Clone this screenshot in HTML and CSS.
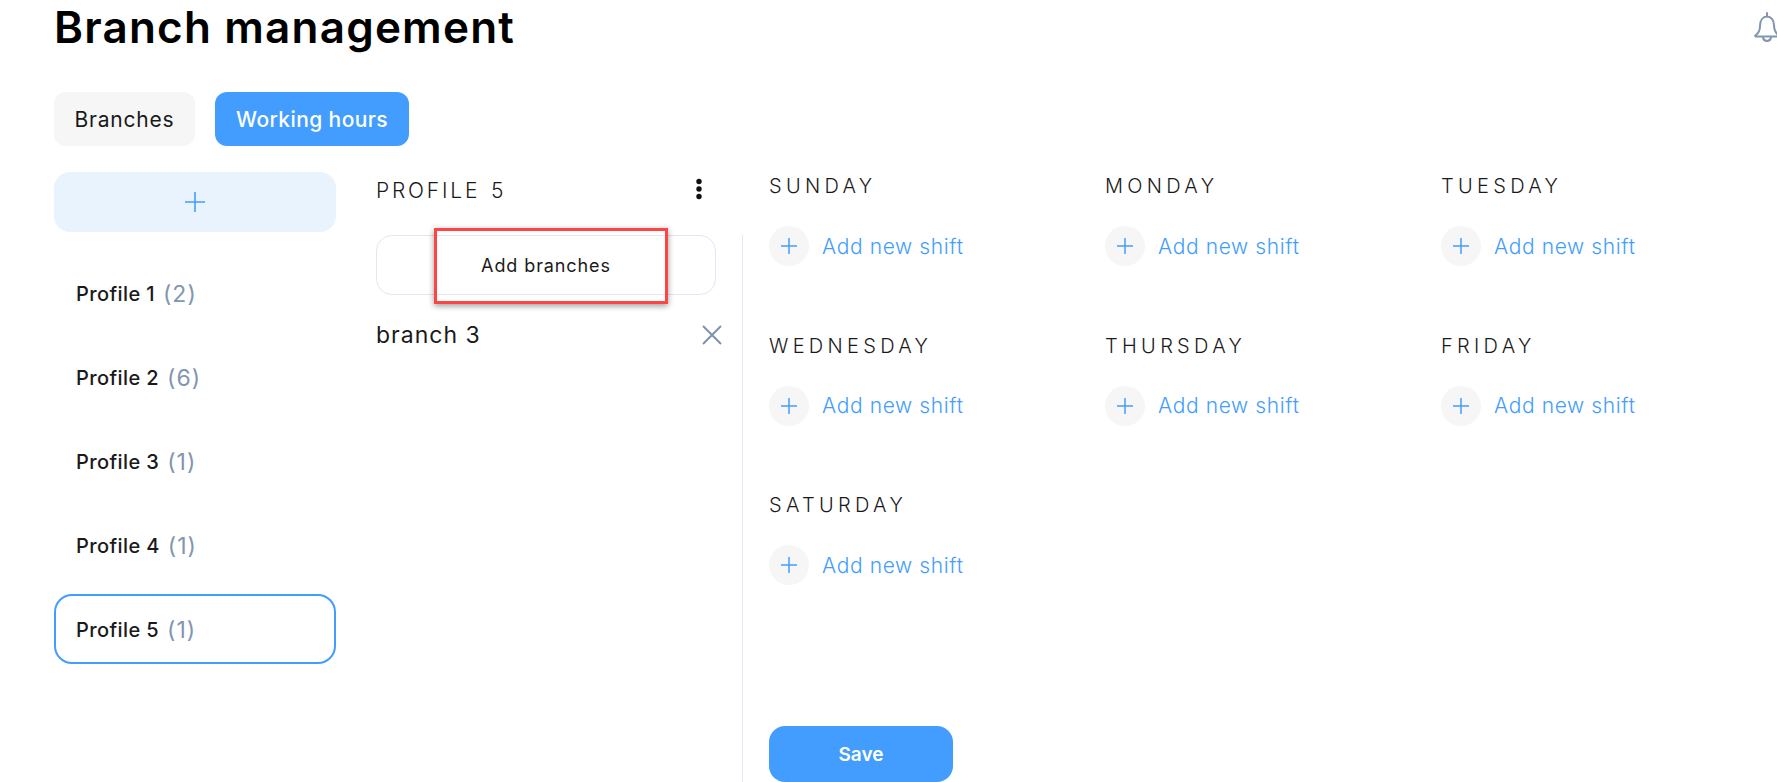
FILE: index.html
```html
<!DOCTYPE html>
<html lang="en">
<head>
  <meta charset="UTF-8" />
  <title>Branch management</title>
  <link rel="stylesheet" href="styles.css">
</head>
<body>

  <div class="page">
    <div class="top-bar">
      <h1>Branch management</h1>
      <svg class="bell" width="34" height="32" viewBox="0 0 34 32" fill="none" stroke="#8296b0" stroke-width="2" stroke-linecap="round" stroke-linejoin="round">
        <path d="M13 1v3.500"/>
        <path d="M2 24.500c-1 0-1-1 0-1.500 2.500-2 4-4 4-9C6 8 9 4.500 13 4.500s7 3.500 7 9c0 5 1.500 7 4 9.500 1 .5 1 1.500 0 1.500z"/>
        <path d="M9 25.500c.5 2.500 2.500 3.500 4 3.500s3.500-1 4-3.500"/>
      </svg>
    </div>

    <div class="tabs">
      <button class="tab">Branches</button>
      <button class="tab tab-active">Working hours</button>
    </div>

    <div class="content">
      <div class="profiles">
        <button class="add-profile">
          <svg width="22" height="22" viewBox="0 0 22 22" stroke="#429dff" stroke-width="1.600"><path d="M11 1v20M1 11h20"/></svg>
        </button>
        <div class="profile-list">
          <div class="profile">Profile 1 <span class="count">(2)</span></div>
          <div class="profile">Profile 2 <span class="count">(6)</span></div>
          <div class="profile">Profile 3 <span class="count">(1)</span></div>
          <div class="profile">Profile 4 <span class="count">(1)</span></div>
          <div class="profile profile-active">Profile 5 <span class="count">(1)</span></div>
        </div>
      </div>

      <div class="details">
        <div class="details-head">
          <h2>PROFILE 5</h2>
          <svg width="8" height="22" viewBox="0 0 8 22" fill="#111"><circle cx="4" cy="3.500" r="2.700"/><circle cx="4" cy="11" r="2.700"/><circle cx="4" cy="18.500" r="2.700"/></svg>
        </div>
        <div class="details-body">
          <div class="branches">
            <div class="add-branches">
              Add branches
              <div class="highlight"></div>
            </div>
            <div class="branch">
              <span>branch 3</span>
              <svg width="20" height="20" viewBox="0 0 20 20" stroke="#7f92ab" stroke-width="2"><path d="M1 1l18 18M19 1L1 19"/></svg>
            </div>
          </div>
        </div>
      </div>

      <div class="hours">
        <div class="days">
          <div class="day">
            <h3>SUNDAY</h3>
            <div class="add-shift"><span class="plus"><svg width="18" height="18" viewBox="0 0 18 18" stroke="#429dff" stroke-width="1.500"><path d="M9 1v16M1 9h16"/></svg></span>Add new shift</div>
          </div>
          <div class="day">
            <h3>MONDAY</h3>
            <div class="add-shift"><span class="plus"><svg width="18" height="18" viewBox="0 0 18 18" stroke="#429dff" stroke-width="1.500"><path d="M9 1v16M1 9h16"/></svg></span>Add new shift</div>
          </div>
          <div class="day">
            <h3>TUESDAY</h3>
            <div class="add-shift"><span class="plus"><svg width="18" height="18" viewBox="0 0 18 18" stroke="#429dff" stroke-width="1.500"><path d="M9 1v16M1 9h16"/></svg></span>Add new shift</div>
          </div>
          <div class="day">
            <h3>WEDNESDAY</h3>
            <div class="add-shift"><span class="plus"><svg width="18" height="18" viewBox="0 0 18 18" stroke="#429dff" stroke-width="1.500"><path d="M9 1v16M1 9h16"/></svg></span>Add new shift</div>
          </div>
          <div class="day">
            <h3>THURSDAY</h3>
            <div class="add-shift"><span class="plus"><svg width="18" height="18" viewBox="0 0 18 18" stroke="#429dff" stroke-width="1.500"><path d="M9 1v16M1 9h16"/></svg></span>Add new shift</div>
          </div>
          <div class="day">
            <h3>FRIDAY</h3>
            <div class="add-shift"><span class="plus"><svg width="18" height="18" viewBox="0 0 18 18" stroke="#429dff" stroke-width="1.500"><path d="M9 1v16M1 9h16"/></svg></span>Add new shift</div>
          </div>
          <div class="day">
            <h3>SATURDAY</h3>
            <div class="add-shift"><span class="plus"><svg width="18" height="18" viewBox="0 0 18 18" stroke="#429dff" stroke-width="1.500"><path d="M9 1v16M1 9h16"/></svg></span>Add new shift</div>
          </div>
        </div>
        <button class="save">Save</button>
      </div>
    </div>
  </div>

</body>
</html>
```

FILE: styles.css
```css
html, body {
  height: 100%;
  margin: 0;
  overflow: hidden;
}
body {
  font-family: Inter, "Noto Sans", sans-serif;
  background: #fff;
  color: #111;
}
button {
  font-family: inherit;
  border: none;
  cursor: pointer;
}
.page {
  height: 782px;
  padding-left: 54px;
  box-sizing: border-box;
  overflow: hidden;
}
.top-bar {
  display: flex;
  justify-content: space-between;
  align-items: flex-start;
  height: 92px;
}
.top-bar h1 {
  margin: 2px 0 0;
  font-size: 44px;
  line-height: 50px;
  font-weight: 600;
  letter-spacing: 1.2px;
  color: #000;
}
.bell {
  margin-top: 12px;
  margin-right: -11px;
}
.tabs {
  display: flex;
  gap: 20px;
  height: 54px;
}
.tab {
  height: 54px;
  width: 141px;
  border-radius: 12px;
  background: #f6f6f6;
  font-size: 21px;
  letter-spacing: 0.8px;
  color: #1a1a1a;
  padding: 0;
}
.tab-active {
  width: 194px;
  background: #429dff;
  color: #fff;
  font-weight: 500;
  letter-spacing: 0.4px;
}
.content {
  display: grid;
  grid-template-columns: 282px 340px 1fr;
  column-gap: 40px;
  margin-top: 26px;
}
.add-profile {
  display: flex;
  align-items: center;
  justify-content: center;
  width: 282px;
  height: 60px;
  background: #e8f3fe;
  border-radius: 16px;
  padding: 0;
}
.profile-list {
  display: flex;
  flex-direction: column;
  gap: 14px;
  margin-top: 26px;
}
.profile {
  box-sizing: border-box;
  height: 70px;
  display: flex;
  align-items: center;
  gap: 8px;
  padding: 1px 0 0 22px;
  border-radius: 18px;
  font-size: 20px;
  letter-spacing: 0.4px;
  font-weight: 450;
  color: #1a1a1a;
}
.profile-active {
  border: 2px solid #429dff;
  padding-left: 20px;
}
.count {
  color: #8296b0;
  font-size: 23px;
  font-weight: 400;
  letter-spacing: 1px;
}
.details-head {
  display: flex;
  justify-content: space-between;
  align-items: center;
  height: 34px;
  padding-right: 13px;
}
.details-head h2 {
  margin: 2px 0 0;
  font-size: 21px;
  font-weight: 300;
  letter-spacing: 2.800px;
  word-spacing: 2px;
  color: #1a1a1a;
}
.details-body {
  margin-top: 29px;
  margin-right: -27px;
  height: 600px;
  border-right: 1px solid #dfe8f2;
}
.branches {
  width: 346px;
}
.add-branches {
  position: relative;
  display: flex;
  align-items: center;
  justify-content: center;
  width: 338px;
  height: 58px;
  border: 1px solid #dfe8f2;
  border-radius: 16px;
  font-size: 18px;
  letter-spacing: 0.9px;
  font-weight: 420;
  color: #1a1a1a;
}
.highlight {
  position: absolute;
  left: 57px;
  top: -8px;
  width: 228px;
  height: 70px;
  border: 3px solid #f44;
  box-shadow: 0 2px 6px rgba(0, 0, 0, 0.4);
}
.branch {
  display: flex;
  justify-content: space-between;
  align-items: center;
  margin-top: 26px;
  height: 28px;
  font-size: 23px;
  letter-spacing: 1px;
  color: #1a1a1a;
}
.hours {
  position: relative;
  margin-left: 13px;
  margin-top: -1px;
}
.days {
  display: grid;
  grid-template-columns: repeat(3, 336px);
  row-gap: 64.500px;
}
.day h3 {
  margin: 0;
  height: 30px;
  line-height: 30px;
  font-size: 20px;
  font-weight: 300;
  letter-spacing: 4.300px;
  color: #1a1a1a;
}
.add-shift {
  display: flex;
  align-items: center;
  gap: 13px;
  margin-top: 25px;
  font-size: 21px;
  letter-spacing: 0.62px;
  font-weight: 300;
  color: #429dff;
}
.plus {
  display: flex;
  align-items: center;
  justify-content: center;
  width: 40px;
  height: 40px;
  border-radius: 50%;
  background: #f6f6f6;
}
.save {
  position: absolute;
  left: 0;
  top: 555px;
  width: 184px;
  height: 56px;
  border-radius: 16px;
  background: #429dff;
  color: #fff;
  font-size: 19px;
  font-weight: 600;
}
```
